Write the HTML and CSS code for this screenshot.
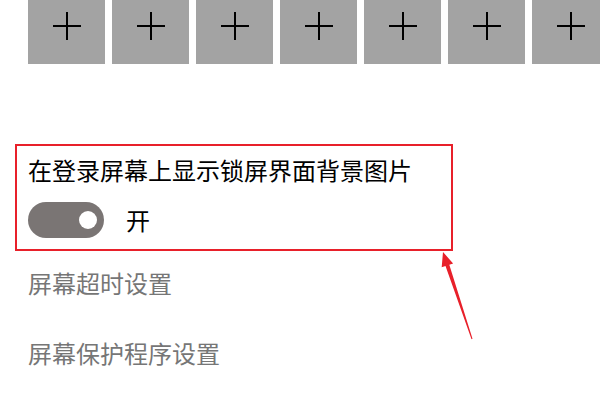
FILE: index.html
```html
<!DOCTYPE html>
<html lang="zh-CN">
<head>
  <meta charset="UTF-8" />
  <meta name="viewport" content="width=device-width,initial-scale=1.0"/>
  <title>锁屏界面</title>
  <link rel="stylesheet" href="styles.css">
</head>
<body>
  <div class="page">
    <div class="tiles">
      <div class="tile"><span class="plus"></span></div>
      <div class="tile"><span class="plus"></span></div>
      <div class="tile"><span class="plus"></span></div>
      <div class="tile"><span class="plus"></span></div>
      <div class="tile"><span class="plus"></span></div>
      <div class="tile"><span class="plus"></span></div>
      <div class="tile"><span class="plus"></span></div>
    </div>

    <div class="setting highlight">
      <div class="setting-title">在登录屏幕上显示锁屏界面背景图片</div>
      <div class="toggle-row">
        <div class="toggle"><span class="knob"></span></div>
        <span class="toggle-label">开</span>
      </div>
    </div>

    <a class="link" href="#">屏幕超时设置</a>
    <a class="link" href="#">屏幕保护程序设置</a>

    <svg class="arrow" viewBox="430 255 50 105" width="50" height="105">
      <polygon points="443,265 453.1,276.4 449.3,277.7 472.5,351.8 471.5,352.2 445.5,279 441.7,280.2" fill="#e8202a"/>
    </svg>
  </div>
</body>
</html>
```

FILE: styles.css
```css
:root {
  --tile-color: #a3a3a3;
  --mark-color: #e8202a;
  --muted-color: #767676;
  --toggle-color: #7a7574;
}
* { margin: 0; padding: 0; box-sizing: border-box; }
body {
  font-family: "Noto Sans CJK SC", "Noto Sans", sans-serif;
  background: #fff;
  color: #000;
  width: 600px;
  height: 400px;
  overflow: hidden;
}
.page { position: relative; width: 600px; height: 400px; }

.tiles {
  display: flex;
  gap: 7px;
  padding-left: 28px;
  margin-top: -13px;
  overflow: hidden;
}
.tile {
  flex: 0 0 77px;
  height: 77px;
  background: var(--tile-color);
  display: flex;
  align-items: center;
  justify-content: center;
}
.plus { position: relative; width: 28px; height: 28px; }
.plus::before, .plus::after { content: ""; position: absolute; background: #000; }
.plus::before { left: 0; right: 0; top: 13px; height: 2px; }
.plus::after { top: 0; bottom: 0; left: 13px; width: 2px; }

.highlight {
  margin: 80px 0 0 15px;
  width: 438px;
  height: 107px;
  border: 2px solid var(--mark-color);
  padding: 8px 11px 0;
}
.setting-title { font-size: 24px; line-height: 32px; white-space: nowrap; }
.toggle-row { display: flex; align-items: center; margin-top: 16px; gap: 22px; }
.toggle {
  width: 76px;
  height: 36px;
  border-radius: 18px;
  background: var(--toggle-color);
  display: flex;
  align-items: center;
  justify-content: flex-end;
  padding-right: 7px;
}
.knob { width: 18px; height: 18px; border-radius: 50%; background: #fff; }
.toggle-label { font-size: 24px; line-height: 32px; }

.link {
  display: block;
  margin-left: 28px;
  font-size: 24px;
  line-height: 32px;
  color: var(--muted-color);
  text-decoration: none;
}
.link:first-of-type { margin-top: 16px; }
.link + .link { margin-top: 38px; }

.arrow { position: absolute; left: 430px; top: 255px; }
```
